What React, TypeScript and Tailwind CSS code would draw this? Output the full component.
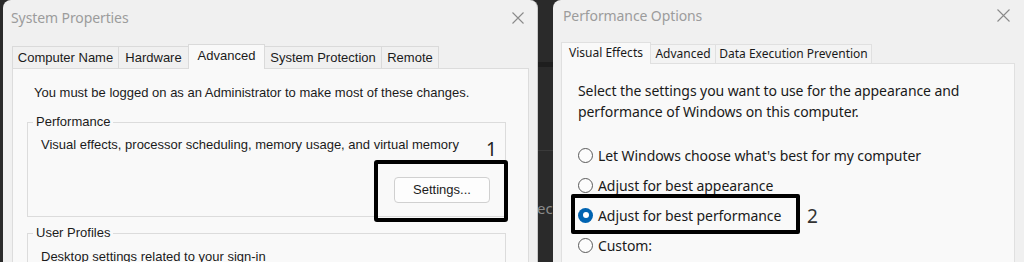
import React from "react";

const SEG = "font-['Noto_Sans',sans-serif]";
const ARIAL = "font-['Liberation_Sans',Arial,sans-serif]";

function CloseX({ size }: { size: number }) {
  return (
    <svg width={size} height={size} viewBox={`0 0 ${size} ${size}`} className="shrink-0">
      <path d={`M0.5 0.5 L${size - 0.5} ${size - 0.5} M${size - 0.5} 0.5 L0.5 ${size - 0.5}`} stroke="#8a8a8a" strokeWidth="1.1" fill="none" />
    </svg>
  );
}

function LeftTab({ label, w, selected, first }: { label: string; w: string; selected?: boolean; first?: boolean }) {
  return (
    <div
      className={`${w} ${first ? "" : "-ml-px"} flex items-center justify-center whitespace-nowrap border border-b-0 border-[#dadada] ${
        selected ? "relative z-10 h-[25px] -mb-px bg-[#f9f9f9] pb-[3px]" : "h-[22px] bg-[#f0f0f0]"
      }`}
    >
      {label}
    </div>
  );
}

function LeftWindow() {
  return (
    <div className={`relative w-[535px] shrink-0 rounded-t-[8px] border-r border-[#c9c9c9] bg-[#f0f0f0] ${ARIAL} text-[13px] leading-[16px] text-[#1b1b1b]`}>
      <div className="flex h-[36px] items-center justify-between pl-[8px] pr-[13px]">
        <span className={`${SEG} text-[14px] tracking-[-0.1px] text-[#9c9c9c]`}>System Properties</span>
        <CloseX size={12} />
      </div>
      <div className="flex items-end pl-[9px] pt-[8px]">
        <LeftTab label="Computer Name" w="w-[107px]" first />
        <LeftTab label="Hardware" w="w-[71px]" />
        <LeftTab label="Advanced" w="w-[77px]" selected />
        <LeftTab label="System Protection" w="w-[118px]" />
        <LeftTab label="Remote" w="w-[58px]" />
      </div>
      <div className="ml-[9px] h-[200px] w-[517px] border border-b-0 border-[#dcdcdc] bg-[#f9f9f9] pt-[16px]">
        <div className="pl-[21px]">You must be logged on as an Administrator to make most of these changes.</div>
        <fieldset className="ml-[14px] mt-[13px] w-[479px] border border-[#dcdcdc] pb-[13px]">
          <legend className="ml-[5px] px-[3px]">Performance</legend>
          <div className="mt-[7px] pl-[13px]">Visual effects, processor scheduling, memory usage, and virtual memory</div>
          <div className="mt-[24px] flex justify-end pr-[15px]">
            <div className="flex h-[26px] w-[96px] items-center justify-center rounded-[4px] border border-[#d0d0d0] bg-[#fdfdfd]">
              Settings...
            </div>
          </div>
        </fieldset>
        <fieldset className="ml-[14px] mt-[8px] w-[479px] border border-[#dcdcdc] pb-[13px]">
          <legend className="ml-[5px] px-[3px]">User Profiles</legend>
          <div className="mt-[8px] pl-[13px]">Desktop settings related to your sign-in</div>
        </fieldset>
      </div>
      <div className="absolute left-[371px] top-[160px] h-[62px] w-[134px] rounded-[3px] border-[4px] border-black" />
      <div className={`absolute left-[483px] top-[136px] ${SEG} text-[19px] leading-[26px] text-[#222]`}>1</div>
    </div>
  );
}

function Gap() {
  return (
    <div className="flex w-[15px] shrink-0 flex-col overflow-hidden">
      <div className="h-[62px]" />
      <div className="h-[5px] bg-[#1e1e1e]" />
      <div className="h-[83px]" />
      <div className="h-px bg-[#3a3a3a]" />
      <div className="h-[47px]" />
      <div className={`${SEG} -ml-[1px] whitespace-nowrap text-[15px] leading-[20px] text-[#8a8a8a]`}>ec</div>
    </div>
  );
}

function RightTab({ label, w, selected, first }: { label: string; w: string; selected?: boolean; first?: boolean }) {
  return (
    <div
      className={`${w} ${first ? "" : "-ml-px"} flex items-center justify-center whitespace-nowrap border border-b-0 border-[#e0e0e0] ${
        selected ? "relative z-10 h-[22px] -mb-px bg-[#f9f9f9] pb-[1px]" : "h-[19px] bg-[#f3f3f3]"
      }`}
    >
      {label}
    </div>
  );
}

function Radio({ label, checked }: { label: string; checked?: boolean }) {
  return (
    <div className="flex h-[30px] items-center gap-[5px]">
      {checked ? (
        <span className="flex h-[15px] w-[15px] shrink-0 items-center justify-center rounded-full bg-[#0063b1]">
          <span className="h-[6px] w-[6px] rounded-full bg-white" />
        </span>
      ) : (
        <span className="h-[15px] w-[15px] shrink-0 rounded-full border border-[#5a5a5a] bg-[#fcfcfc]" />
      )}
      <span className="whitespace-nowrap">{label}</span>
    </div>
  );
}

function RightWindow() {
  return (
    <div className={`relative flex-1 rounded-tl-[8px] bg-[#f0f0f0] ${SEG} text-[#1a1a1a]`}>
      <div className="flex h-[30px] items-center justify-between pl-[10px] pr-[14px]">
        <span className="text-[14px] tracking-[-0.1px] text-[#9c9c9c]">Performance Options</span>
        <CloseX size={13} />
      </div>
      <div className="flex items-end pl-[8px] pt-[12px] text-[12px]">
        <RightTab label="Visual Effects" w="w-[90px]" selected first />
        <RightTab label="Advanced" w="w-[66px]" />
        <RightTab label="Data Execution Prevention" w="w-[157px]" />
      </div>
      <div className="ml-[8px] h-[200px] w-[454px] border border-b-0 border-[#e0e0e0] bg-[#f9f9f9] pl-[16px] pt-[16px] text-[14px] leading-[21px] tracking-[-0.08px]">
        <div className="whitespace-nowrap">Select the settings you want to use for the appearance and</div>
        <div className="whitespace-nowrap">performance of Windows on this computer.</div>
        <div className="mt-[18px] flex flex-col">
          <Radio label="Let Windows choose what's best for my computer" />
          <Radio label="Adjust for best appearance" />
          <Radio label="Adjust for best performance" checked />
          <Radio label="Custom:" />
        </div>
      </div>
      <div className="absolute left-[18px] top-[194px] h-[40px] w-[229px] rounded-[2px] border-[4px] border-black" />
      <div className="absolute left-[254px] top-[203px] text-[19px] leading-[26px] text-[#333]">2</div>
    </div>
  );
}

export default function App() {
  return (
    <div className="flex h-[262px] w-[1024px] overflow-hidden bg-[#2a2a2a] pl-[3px]">
      <LeftWindow />
      <Gap />
      <RightWindow />
    </div>
  );
}
